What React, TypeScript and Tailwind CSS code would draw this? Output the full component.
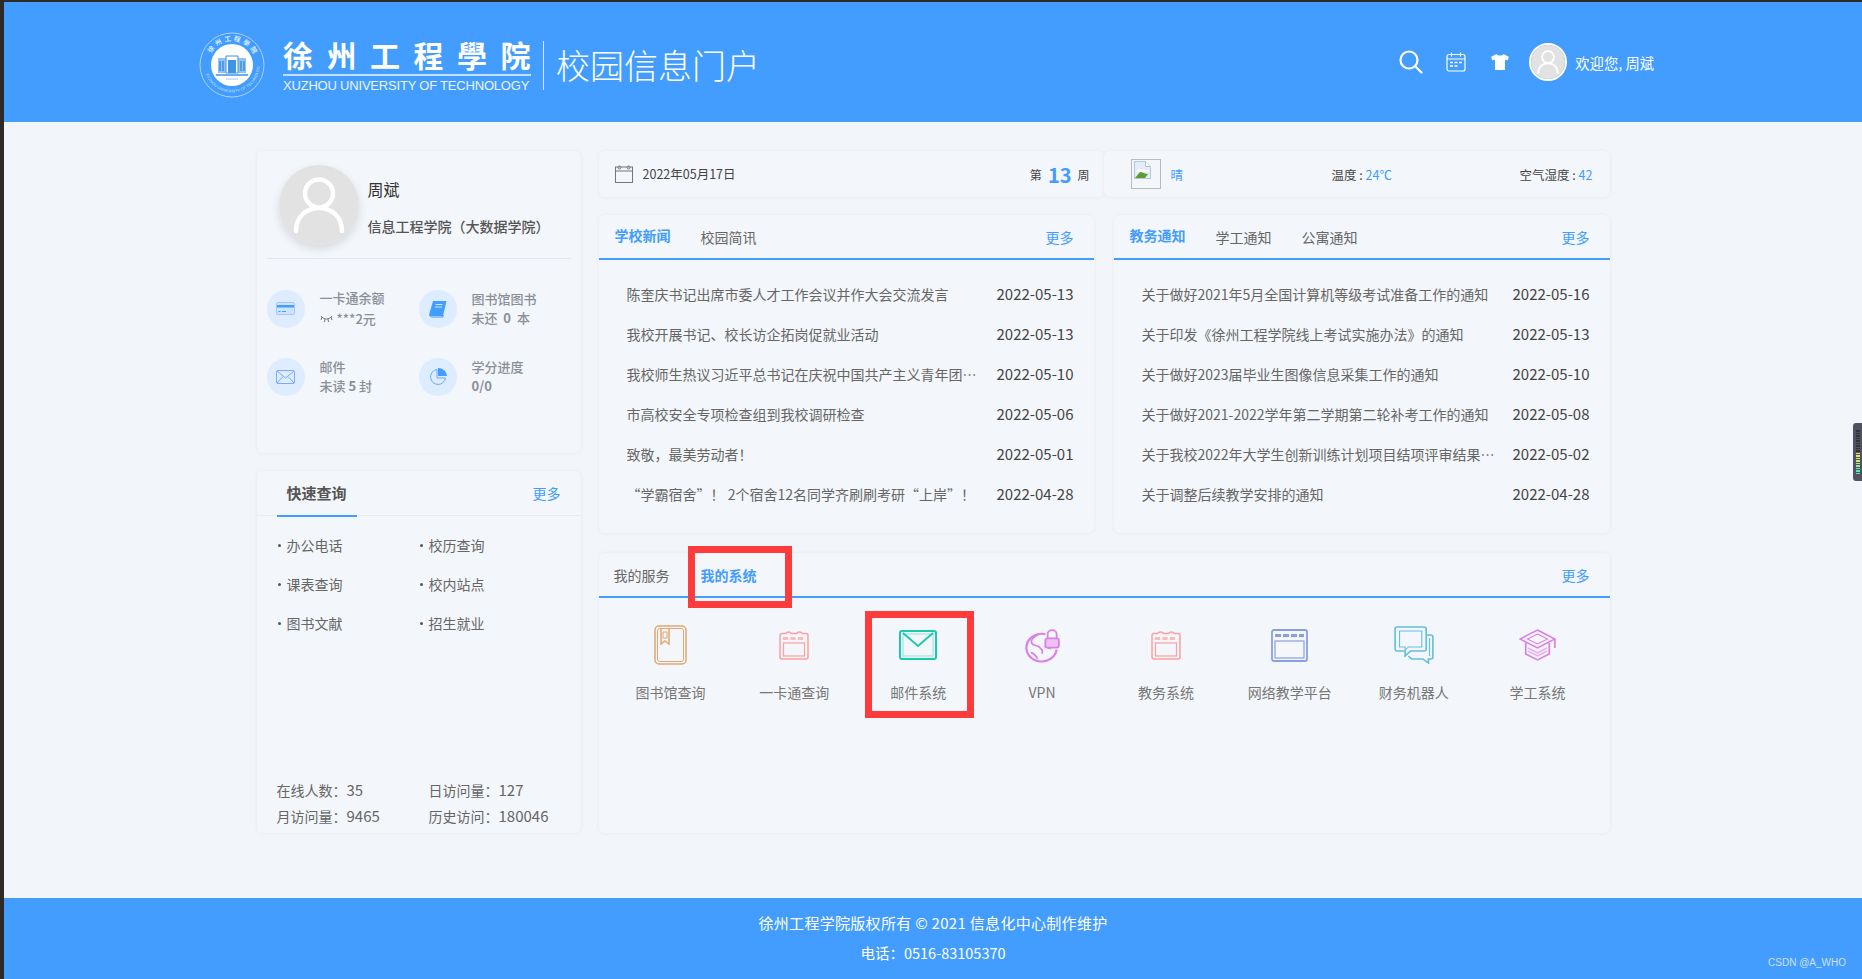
import React from "react";

const CJK = "font-['Noto_Sans_CJK_SC','Noto_Sans',sans-serif]";
const newsL: [string, string][] = [
  ["陈奎庆书记出席市委人才工作会议并作大会交流发言", "2022-05-13"],
  ["我校开展书记、校长访企拓岗促就业活动", "2022-05-13"],
  ["我校师生热议习近平总书记在庆祝中国共产主义青年团成立100周年大会上的重要讲话", "2022-05-10"],
  ["市高校安全专项检查组到我校调研检查", "2022-05-06"],
  ["致敬，最美劳动者！", "2022-05-01"],
  ["“学霸宿舍”！ 2个宿舍12名同学齐刷刷考研“上岸”！", "2022-04-28"],
];
const newsR: [string, string][] = [
  ["关于做好2021年5月全国计算机等级考试准备工作的通知", "2022-05-16"],
  ["关于印发《徐州工程学院线上考试实施办法》的通知", "2022-05-13"],
  ["关于做好2023届毕业生图像信息采集工作的通知", "2022-05-10"],
  ["关于做好2021-2022学年第二学期第二轮补考工作的通知", "2022-05-08"],
  ["关于我校2022年大学生创新训练计划项目结项评审结果的公示通知", "2022-05-02"],
  ["关于调整后续教学安排的通知", "2022-04-28"],
];

function Card({ className = "", children }: { className?: string; children?: React.ReactNode }) {
  return <div className={"rounded-[6px] bg-[#f3f6fa] shadow-[0_0_4px_rgba(0,0,0,0.05)] " + className}>{children}</div>;
}

function Logo() {
  return (
    <svg width="66" height="66" viewBox="0 0 66 66" className="shrink-0">
      <defs>
        <path id="ringT" d="M9 33a24 24 0 0 1 48 0" />
        <path id="ringB" d="M5.5 33a27.500 27.500 0 0 0 55 0" />
      </defs>
      <circle cx="33" cy="33" r="32" fill="none" stroke="#a9d2ff" strokeWidth="1" />
      <circle cx="33" cy="33" r="21" fill="#fff" />
      <text fontSize="6.500" fill="#dcecff" fontWeight="700" fontFamily="Noto Sans CJK TC, sans-serif" letterSpacing="2.500">
        <textPath href="#ringT" startOffset="12">徐州工程學院</textPath>
      </text>
      <text fontSize="3.800" fill="#cfe5ff" fontFamily="Liberation Sans, sans-serif" letterSpacing=".15">
        <textPath href="#ringB" startOffset="9">XUZHOU UNIVERSITY OF TECHNOLOGY</textPath>
      </text>
      <path d="M19 26h28v15H19z" fill="#8fc3f5" />
      <path d="M27 24h12v17H27z" fill="#fff" stroke="#3f93e8" strokeWidth="1" />
      <path d="M29 28h8v13h-8z" fill="#3f93e8" />
      <path d="M21 29v10M24 29v10M42 29v10M45 29v10" stroke="#2f80d8" strokeWidth="1.200" />
      <path d="M17 43h32" stroke="#3f93e8" strokeWidth="1.500" />
      <path d="M27 47h12" stroke="#9cc8f2" strokeWidth="1" />
    </svg>
  );
}

function Avatar({ size, sw }: { size: number; sw: number }) {
  return (
    <svg width={size} height={size} viewBox="0 0 80 80" className="block">
      <circle cx="40" cy="40" r="40" fill="#e2e2e2" />
      <circle cx="40" cy="28.500" r="14" fill="none" stroke="#fff" strokeWidth={sw} />
      <path d="M17 66c0-14 10-23 23-23s23 9 23 23" fill="none" stroke="#fff" strokeWidth={sw} strokeLinecap="round" />
    </svg>
  );
}

function StatCircle({ children }: { children: React.ReactNode }) {
  return <div className="flex h-[38px] w-[38px] shrink-0 items-center justify-center rounded-full bg-[#ddecff]">{children}</div>;
}

function Stat({ icon, title, sub, w }: { icon: React.ReactNode; title: string; sub: React.ReactNode; w: string }) {
  return (
    <div className={"flex items-center gap-[15px] " + w}>
      <StatCircle>{icon}</StatCircle>
      <div className="text-[13px] leading-[19px] font-medium text-[#8a8f98]">
        <div className="-mt-[2px]">{title}</div>
        <div>{sub}</div>
      </div>
    </div>
  );
}

function More() {
  return <span className="text-[14px] text-[#439dff]">更多</span>;
}

function NewsRow({ t, d, w }: { t: string; d: string; w: string }) {
  return (
    <div className="flex h-[40px] items-center justify-between">
      <div className={"truncate text-[14px] text-[#666] " + w}>{t}</div>
      <div className="text-[15px] text-[#444]">{d}</div>
    </div>
  );
}

function NewsCard({ tabs, rows, w, gap }: { tabs: string[]; rows: [string, string][]; w: string; gap: string }) {
  return (
    <Card className="h-[318px]">
      <div className="flex h-[45px] items-center justify-between border-b-2 border-[#439dff] pt-[1px] pr-[20px] pl-[16px]">
        <div className={"flex items-center " + gap}>
          {tabs.map((t, i) =>
            i === 0 ? (
              <span key={t} className="pb-[4px] text-[14px] font-bold text-[#439dff]">{t}</span>
            ) : (
              <span key={t} className="text-[14px] text-[#666]">{t}</span>
            ),
          )}
        </div>
        <More />
      </div>
      <div className="pt-[14px] pr-[20px] pl-[28px]">
        {rows.map((r) => <NewsRow key={r[0]} t={r[0]} d={r[1]} w={w} />)}
      </div>
    </Card>
  );
}

function CalIcon() {
  return (
    <svg width="30" height="30" viewBox="0 0 30 30" fill="none" stroke="#ff9e9e" strokeWidth="1.500">
      <path d="M3 3.500h3.500a3.500 3 0 0 1 6 0h5a3.500 3 0 0 1 6 0H27a2 2 0 0 1 2 2V27a2 2 0 0 1-2 2H3a2 2 0 0 1-2-2V5.500a2 2 0 0 1 2-2z" />
      <rect x="4.500" y="13" width="21" height="13" strokeWidth="1.200" />
      <path d="M4 8.500h22" strokeWidth="3" strokeDasharray="5 2.500" stroke="#ffb9b9" />
    </svg>
  );
}

const sys: [string, React.ReactNode][] = [
  ["图书馆查询", (
    <svg width="33" height="40" viewBox="0 0 33 40" fill="none" stroke="#e5a66f" strokeWidth="1.500">
      <rect x="1" y="1" width="31" height="38" rx="4" />
      <rect x="3.500" y="3.500" width="26" height="33" rx="2" strokeWidth="1" />
      <path d="M7 4v15l4-3 4 3V4" fill="#f3f6fa" />
      <path d="M9 7h4v6H9z" strokeWidth="1" />
    </svg>
  )],
  ["一卡通查询", <CalIcon key="c1" />],
  ["邮件系统", (
    <svg width="38" height="30" viewBox="0 0 38 30" fill="none" stroke="#1cc9ae" strokeWidth="2">
      <rect x="1" y="1" width="36" height="28" rx="2" />
      <rect x="4" y="4" width="30" height="22" strokeWidth="1" stroke="#8fe3d3" />
      <path d="M4 3l15 13L34 3" />
    </svg>
  )],
  ["VPN", (
    <svg width="36" height="37" viewBox="0 0 32 36" preserveAspectRatio="none" fill="none" stroke="#db80e6" strokeWidth="1.600">
      <path d="M19 7a13.500 13.500 0 1 0 10 15" strokeWidth="2" />
      <path d="M13 7c-4 3-8 5-6 9 2 3 5 1 7 4 2 2 3 3 2 6M6 25c2 0 5 3 6 6M24 21c-3 0-4-2-6-2" />
      <path d="M21 12V7a4 4 0 0 1 8 0v5" />
      <rect x="19" y="11" width="12" height="9" rx="2" fill="#eec0f3" />
    </svg>
  )],
  ["教务系统", <CalIcon key="c2" />],
  ["网络教学平台", (
    <svg width="37" height="33" viewBox="0 0 37 33" fill="none" stroke="#8a9ee0" strokeWidth="1.800">
      <rect x="1" y="1" width="35" height="31" rx="2" />
      <rect x="4" y="12" width="29" height="17" strokeWidth="1.200" />
      <path d="M4 6.500h29" strokeWidth="3" strokeDasharray="6 2" />
    </svg>
  )],
  ["财务机器人", (
    <svg width="40" height="38" viewBox="0 0 36 38" preserveAspectRatio="none" fill="none" stroke="#64bfe0" strokeWidth="1.500">
      <path d="M3 1h24a2 2 0 0 1 2 2v20a2 2 0 0 1-2 2H15l-5 5v-5H3a2 2 0 0 1-2-2V3a2 2 0 0 1 2-2z" />
      <path d="M5 5h20v16H13l-3 3v-3H5z" strokeWidth="1" />
      <path d="M29 9h4a2 2 0 0 1 2 2v20a2 2 0 0 1-2 2h-2v4l-5-4H16l-3-3" />
      <path d="M32 12v18" strokeWidth="1" />
    </svg>
  )],
  ["学工系统", (
    <svg width="37" height="32" viewBox="0 0 33 32" preserveAspectRatio="none" fill="none" stroke="#db80e6" strokeWidth="1.500">
      <path d="M16.500 1L32 10 16.500 19 1 10z" />
      <path d="M16.500 5l9 5-9 5-9-5z" strokeWidth="1" />
      <path d="M6 14v11l10.500 6L27 25V14" />
      <path d="M8 19l8.500 5 8.500-5M8 22l8.500 5 8.500-5" strokeWidth="1.500" stroke="#eab0f0" />
      <path d="M32 10v9" />
    </svg>
  )],
];

function Links({ items }: { items: string[] }) {
  return (
    <div className="flex flex-col">
      {items.map((t) => (
        <div key={t} className="flex h-[39px] items-center text-[14px] text-[#666]">
          <span className="mr-[6px] h-[3px] w-[3px] rounded-full bg-[#555]" />
          {t}
        </div>
      ))}
    </div>
  );
}

function Num({ children }: { children: React.ReactNode }) {
  return <span className="text-[15px]">{children}</span>;
}

export default function App() {
  return (
    <div className={"relative flex h-[979px] flex-col overflow-hidden bg-[#2d2a28] pt-[2px] pl-[4px] " + CJK}>
      <header className="flex h-[120px] shrink-0 items-center justify-between bg-[#439dff] pr-[208px] pl-[195px] text-white">
        <div className="flex items-center pt-[6px]">
          <Logo />
          <div className="ml-[18px] flex w-[248px] flex-col">
            <div className="h-[36px] font-['Noto_Sans_CJK_TC',sans-serif] text-[30px] leading-[36px] font-bold tracking-[13.500px] whitespace-nowrap">徐州工程學院</div>
            <div className="mt-[2px] h-[2px] bg-[#c4e0ff]" />
            <div className="mt-[2px] font-['Liberation_Sans',sans-serif] text-[13px] leading-[16px] tracking-[-0.2px] whitespace-nowrap text-[#eaf4ff]">XUZHOU UNIVERSITY OF TECHNOLOGY</div>
          </div>
          <div className="mx-[12px] h-[49px] w-px bg-[#d9ebff]" />
          <div className="text-[34px] leading-[40px] font-light whitespace-nowrap">校园信息门户</div>
        </div>
        <div className="flex items-center">
          <svg width="24" height="24" viewBox="0 0 24 24" fill="none" stroke="#fff" strokeWidth="2.200" strokeLinecap="round">
            <circle cx="10" cy="10" r="8.500" />
            <path d="M16.500 16.500l6 6" />
          </svg>
          <svg className="ml-[23px]" width="20" height="20" viewBox="0 0 20 20" fill="none" stroke="#fff" strokeWidth="1.200">
            <rect x="1" y="2.500" width="18" height="16.500" rx="2" />
            <path d="M1 7h18M5.500 0.500v4M14.500 0.500v4" />
            <path d="M4 10.500h3M8.500 10.500h3M13 10.500h3M4 14h3M8.500 14h3" strokeWidth="1.600" />
          </svg>
          <svg className="ml-[25px]" width="18" height="16" viewBox="0 0 18 16" fill="#fff">
            <path d="M5.500 0L0 3l1.500 3.500L4 5.500V16h10V5.500l2.500 1L18 3l-5.500-3C11.500 2 6.500 2 5.500 0z" />
          </svg>
          <div className="ml-[20px] rounded-full border-2 border-white">
            <Avatar size={34} sw={4.500} />
          </div>
          <div className="mt-[2px] ml-[8px] text-[14.300px] whitespace-nowrap">欢迎您, 周斌</div>
        </div>
      </header>

      <main className="flex-1 bg-[#f2f6fa] pt-[29px]">
        <div className="mx-auto flex w-[1353px] gap-[18px]">
          <div className="flex w-[324px] shrink-0 flex-col gap-[18px]">
            <Card className="h-[302px] px-[10px]">
              <div className="flex h-[108px] items-start border-b border-[#e2e6ec] pt-[14px] pl-[12px]">
                <div className="rounded-full shadow-[0_4px_10px_rgba(0,0,0,0.12)]">
                  <Avatar size={80} sw={4.500} />
                </div>
                <div className="ml-[9px] pt-[12px]">
                  <div className="text-[16px] leading-[24px] text-[#333]">周斌</div>
                  <div className="mt-[13px] text-[14px] leading-[24px] font-medium whitespace-nowrap text-[#555]">信息工程学院（大数据学院）</div>
                </div>
              </div>
              <div className="mt-[31px] flex">
                <Stat
                  w="w-[152px]"
                  title="一卡通余额"
                  icon={
                    <svg width="20" height="14" viewBox="0 0 20 14">
                      <rect x=".5" y=".5" width="18" height="12" rx="1.500" fill="#cfe2ff" stroke="#a9c4ff" />
                      <path d="M1 3h17v2.500H1z" fill="#439dff" />
                      <path d="M2.500 9.500h2M6 9.500h4" stroke="#439dff" strokeWidth="1" />
                    </svg>
                  }
                  sub={
                    <span className="inline-flex items-center">
                      <svg width="13" height="8" viewBox="0 0 13 8" fill="none" stroke="#777" strokeWidth="1" className="mr-[4px]">
                        <path d="M1 2c3 4 8 4 11 0M2 3l-1 3M5 5l-.500 3M8 5l.500 3M11 3l1 3" />
                      </svg>
                      ***2元
                    </span>
                  }
                />
                <Stat
                  w="w-[152px]"
                  title="图书馆图书"
                  icon={
                    <svg width="18" height="17" viewBox="0 0 18 17">
                      <path d="M4 0h13.500L14 15H1.500C0 15 0 14 .3 13z" fill="#439dff" />
                      <path d="M1 14.500c0 1 1 1.500 2 1.500h11l.500-1.500" fill="none" stroke="#439dff" />
                      <path d="M6.500 3.500h7M6 6h7" stroke="#cfe6ff" strokeWidth="1" />
                    </svg>
                  }
                  sub={<span>未还&nbsp;&nbsp;<b>0</b>&nbsp;&nbsp;本</span>}
                />
              </div>
              <div className="mt-[30px] flex">
                <Stat
                  w="w-[152px]"
                  title="邮件"
                  icon={
                    <svg width="19" height="14" viewBox="0 0 19 14" fill="none" stroke="#7fa8ff" strokeWidth="1">
                      <rect x=".5" y=".5" width="18" height="13" rx="1.500" />
                      <path d="M1 1l8.500 7L18 1M1 13l6-6.500M18 13l-6-6.500" />
                    </svg>
                  }
                  sub={<span>未读&nbsp;<b>5</b>&nbsp;封</span>}
                />
                <Stat
                  w="w-[152px]"
                  title="学分进度"
                  icon={
                    <svg width="18" height="18" viewBox="0 0 18 18">
                      <path d="M8 1.500a7.500 7.500 0 1 0 8.500 8.500H8z" fill="none" stroke="#6aa8ff" strokeWidth="1" />
                      <path d="M9 0a9 9 0 0 1 9 8H9z" fill="#439dff" />
                    </svg>
                  }
                  sub={<b>0/0</b>}
                />
              </div>
            </Card>

            <Card className="flex h-[362px] flex-col">
              <div className="flex h-[45px] items-center justify-between border-b border-[#e8ecf1] pr-[20px] pl-[20px]">
                <div className="relative h-[45px] w-[80px] pt-[11px] pl-[10px] text-[15px] leading-[22px] font-bold text-[#555]">
                  快速查询
                  <div className="absolute -bottom-px left-0 h-[2px] w-[80px] bg-[#439dff]" />
                </div>
                <More />
              </div>
              <div className="mt-[10px] flex px-[21px]">
                <div className="w-[142px]">
                  <Links items={["办公电话", "课表查询", "图书文献"]} />
                </div>
                <Links items={["校历查询", "校内站点", "招生就业"]} />
              </div>
              <div className="mt-auto mb-[4px] px-[20px] text-[14px] leading-[26px] text-[#666]">
                <div className="flex"><div className="w-[152px]">在线人数：<Num>35</Num></div><div>日访问量：<Num>127</Num></div></div>
                <div className="flex"><div className="w-[152px]">月访问量：<Num>9465</Num></div><div>历史访问：<Num>180046</Num></div></div>
              </div>
            </Card>
          </div>

          <div className="flex w-[1011px] flex-col">
            <div className="flex h-[46px]">
              <Card className="flex w-[505px] items-center justify-between pr-[14px] pl-[16px]">
                <div className="flex items-center text-[12.500px] text-[#444]">
                  <svg width="18" height="18" viewBox="0 0 18 18" fill="none" stroke="#777" strokeWidth="1" className="mr-[10px]">
                    <rect x=".5" y="2" width="17" height="15.500" />
                    <path d="M.5 6h17" />
                    <circle cx="4.500" cy="2.500" r="1.500" />
                    <circle cx="13.500" cy="2.500" r="1.500" />
                  </svg>
                  2022年05月17日
                </div>
                <div className="flex items-center pt-[2px] text-[12px] text-[#444]">
                  第<span className="mx-[6px] text-[20px] leading-[24px] font-bold text-[#439dff]">13</span>周
                </div>
              </Card>
              <Card className="flex flex-1 items-center pr-[17px] pl-[27px] text-[12.500px] text-[#444]">
                <div className="flex h-[30px] w-[30px] items-start justify-start border border-[#bbb] pt-px pl-[2px]">
                  <svg width="17" height="18" viewBox="0 0 17 18">
                    <path d="M.5.500h11l5 5v12H.5z" fill="#e3edf9" stroke="#b7c6d8" />
                    <path d="M11.500.500v5h5" fill="#fff" stroke="#b7c6d8" />
                    <path d="M2 10c3-3 5-2 8-1s4 0 5-1v3H2z" fill="#fff" />
                    <path d="M1 17l5-6c2 0 5 2 8 2l-3 4z" fill="#5a9e32" />
                  </svg>
                </div>
                <span className="ml-[10px] w-[161px] pt-[3px] text-[#439dff]">晴</span>
                <span className="w-[188px] pt-[3px]">温度 : <span className="text-[#439dff]">24℃</span></span>
                <span className="pt-[3px] whitespace-nowrap">空气湿度 : <span className="text-[#439dff]">42</span></span>
              </Card>
            </div>
            <div className="mt-[18px] grid grid-cols-[495px_496px] gap-[20px]">
              <NewsCard tabs={["学校新闻", "校园简讯"]} rows={newsL} w="w-[350px]" gap="gap-[30px]" />
              <NewsCard tabs={["教务通知", "学工通知", "公寓通知"]} rows={newsR} w="w-[357px]" gap="gap-[30px]" />
            </div>
            <Card className="mt-[20px] h-[280px]">
              <div className="flex h-[45px] items-center justify-between border-b-2 border-[#439dff] pt-[1px] pr-[20px] pl-[15px]">
                <div className="flex items-center gap-[30px] text-[14px]">
                  <span className="text-[#666]">我的服务</span>
                  <span className="pl-[1px] font-bold text-[#439dff]">我的系统</span>
                </div>
                <More />
              </div>
              <div className="grid grid-cols-8 px-[10px] pt-[26px]">
                {sys.map(([label, icon]) => (
                  <div key={label} className="flex flex-col items-center">
                    <div className="flex h-[42px] items-center">{icon}</div>
                    <div className="mt-[16px] text-[14px] leading-[20px] text-[#777]">{label}</div>
                  </div>
                ))}
              </div>
            </Card>
          </div>
        </div>
      </main>

      <footer className="relative flex h-[81px] shrink-0 flex-col items-center bg-[#439dff] pt-[10px] text-[15px] leading-[30px] text-white">
        <div className="tracking-[0.3px]">徐州工程学院版权所有 © 2021 信息化中心制作维护</div>
        <div className="text-[14.500px]">电话：0516-83105370</div>
        <div className="absolute right-[16px] bottom-[10px] font-['Liberation_Sans',sans-serif] text-[10px] leading-[12px] font-normal text-[#cfe0f2]">CSDN @A_WHO</div>
      </footer>

      <div className="absolute top-[546px] left-[688px] h-[62px] w-[104px] border-[7px] border-[#ff3b3b]" />
      <div className="absolute top-[611px] left-[865px] h-[107px] w-[109px] border-[7px] border-[#ff3b3b]" />
      <div className="absolute top-[423px] right-0 flex h-[58px] w-[9px] flex-col items-center gap-[1px] rounded-l-[3px] bg-[#50535f] pt-[7px]">
        {["#333", "#333", "#333", "#333", "#333", "#333", "#333", "#333", "#333", "#eaea50", "#eaea50", "#d8ea60", "#c8ea70", "#b0ea80", "#90ea90", "#70eaa0", "#50eab0", "#40eac0"].map((c, i) => (
          <div key={i} className="h-[1.500px] w-[4px]" style={{ backgroundColor: c }} />
        ))}
      </div>
    </div>
  );
}
